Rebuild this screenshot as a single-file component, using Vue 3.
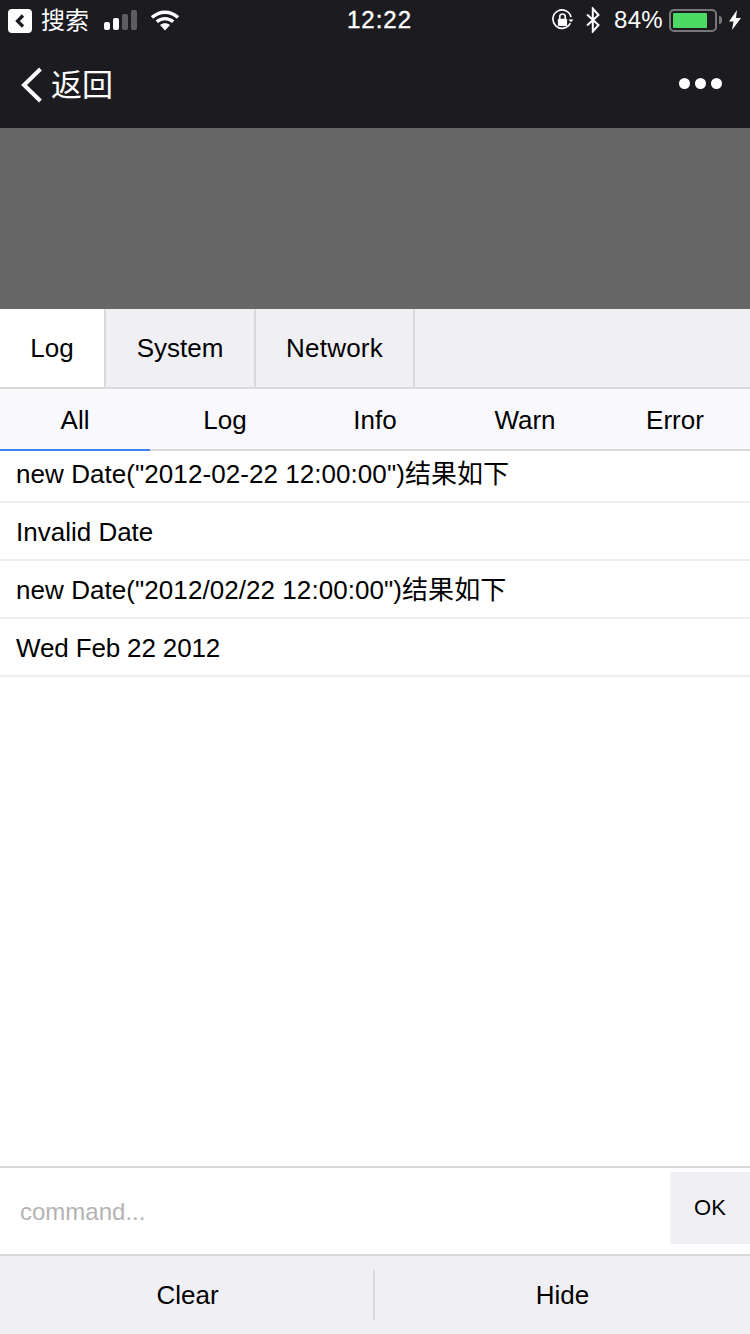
<template>
  <div class="page">
    <div class="status">
      <div class="status-left">
        <svg class="back-chip" width="24" height="24" viewBox="0 0 24 24">
          <rect width="24" height="24" rx="4" fill="#fff" />
          <path d="M15 6.500 9.500 12l5.500 5.500" fill="none" stroke="#1b1b20" stroke-width="3.200" />
        </svg>
        <span class="search">搜索</span>
        <div class="signal">
          <i class="on s1"></i><i class="on s2"></i><i class="s3"></i><i class="s4"></i>
        </div>
        <svg class="wifi" width="28" height="21" viewBox="0 0 28 21">
          <path d="M1 7.500C8.500 .5 19.500 .5 27 7.500" fill="none" stroke="#fff" stroke-width="3.400" />
          <path d="M5.800 11.800C10.500 7.500 17.500 7.500 22.200 11.800" fill="none" stroke="#fff" stroke-width="3.400" />
          <path d="M9 15c3-2.400 7-2.400 10 0l-5 5.500z" fill="#fff" />
        </svg>
      </div>
      <div class="clock">12:22</div>
      <div class="status-right">
        <svg class="lock" width="23" height="22" viewBox="0 0 24 24">
          <path d="M20.500 15.500A10 10 0 1 1 21.300 8.800" fill="none" stroke="#fff" stroke-width="1.800" />
          <path d="M18.500 11.500h5.500l-2.700 3z" fill="#fff" />
          <rect x="7" y="10.500" width="10" height="8" rx="1" fill="#fff" />
          <path d="M9 11V8.500a3 3 0 0 1 6 0V11" fill="none" stroke="#fff" stroke-width="1.800" />
        </svg>
        <svg class="bt" width="16" height="26" viewBox="0 0 16 26">
          <path d="M2 7.500 13.500 18 7.800 24.500V1.500L13.500 8 2 18.500" fill="none" stroke="#fff" stroke-width="2" />
        </svg>
        <span class="pct">84%</span>
        <div class="battery">
          <div class="battery-body"><div class="battery-fill"></div></div>
          <div class="battery-tip"></div>
        </div>
        <svg class="bolt" width="12" height="20" viewBox="0 0 12 20">
          <path d="M8 0 0 11.500h4.500L3 20l9-12H7z" fill="#fff" />
        </svg>
      </div>
    </div>
    <div class="nav">
      <svg class="nav-back" width="24" height="36" viewBox="0 0 24 36">
        <path d="M20.500 2 4 18l16.500 16" fill="none" stroke="#fff" stroke-width="4" />
      </svg>
      <span class="nav-title">返回</span>
      <div class="dots"><i></i><i></i><i></i></div>
    </div>
    <div class="mask"></div>
    <div class="tabs">
      <div class="tab active">Log</div>
      <div class="tab">System</div>
      <div class="tab">Network</div>
    </div>
    <div class="subtabs">
      <div v-for="(item, i) in subtabs" :key="item" class="subtab" :class="{ current: i === 0 }">{{ item }}</div>
    </div>
    <div class="list">
      <div v-for="line in lines" :key="line.text" class="row" :class="line.kind">{{ line.text }}</div>
    </div>
    <div class="command">
      <div class="placeholder">command...</div>
      <div class="ok">OK</div>
    </div>
    <div class="footer">
      <div class="foot-btn clear">Clear</div>
      <div class="foot-btn hide">Hide</div>
    </div>
  </div>
</template>

<script setup>
const subtabs = ['All', 'Log', 'Info', 'Warn', 'Error']
const lines = [
  { text: 'new Date("2012-02-22 12:00:00")结果如下', kind: 'wide' },
  { text: 'Invalid Date', kind: '' },
  { text: 'new Date("2012/02/22 12:00:00")结果如下', kind: 'wide' },
  { text: 'Wed Feb 22 2012', kind: 'narrow' }
]
</script>

<style>
html, body { margin: 0; background: #fff; }
</style>

<style scoped>
.page {
  width: 750px;
  height: 1334px;
  display: flex;
  flex-direction: column;
  overflow: hidden;
  background: #fff;
  color: #000;
  font-family: "Liberation Sans", "Noto Sans CJK SC", sans-serif;
  font-size: 26px;
  line-height: 30px;
}
.status {
  height: 40px;
  flex: none;
  background: #1b1b20;
  color: #fff;
  display: flex;
  align-items: center;
  justify-content: space-between;
  padding: 0 9px 0 8px;
  box-sizing: border-box;
  position: relative;
}
.status-left { display: flex; align-items: center; }
.back-chip { margin-top: 2px; }
.search { font-size: 24px; margin-left: 9px; line-height: 24px; margin-top: 2px; }
.signal { display: flex; align-items: flex-end; gap: 3px; height: 20px; margin-left: 15px; }
.signal i { width: 6px; border-radius: 2px; background: #5c5c62; }
.signal .on { background: #fff; }
.s1 { height: 8px; }
.s2 { height: 12px; }
.s3 { height: 16px; }
.s4 { height: 20px; }
.wifi { margin-left: 14px; }
.clock {
  font-size: 24px;
  letter-spacing: 1px;
  -webkit-text-stroke: .4px #fff;
  position: absolute;
  left: 347px;
  top: 5px;
}
.status-right { display: flex; align-items: center; justify-content: flex-end; }
.lock { margin-right: -1px; }
.bt { margin-left: 12px; }
.pct { font-size: 24px; margin-left: 13px; letter-spacing: .3px; }
.battery { display: flex; align-items: center; margin-left: 6px; }
.battery-body {
  width: 48px;
  height: 23px;
  box-sizing: border-box;
  border: 2px solid #77777b;
  border-radius: 5px;
  padding: 2px;
}
.battery-fill { width: 34px; height: 100%; background: #4cd964; border-radius: 1px; }
.battery-tip { width: 3px; height: 8px; margin-left: 2px; background: #77777b; border-radius: 0 4px 4px 0; }
.bolt { margin-left: 7px; }
.nav {
  height: 88px;
  flex: none;
  background: #1b1b20;
  color: #fff;
  display: flex;
  align-items: center;
  padding: 0 28px 0 20px;
  box-sizing: border-box;
}
.nav-back { margin-top: 1px; }
.nav-title { font-size: 31px; margin-left: 7px; line-height: 36px; margin-top: 3px; }
.dots { margin-left: auto; display: flex; gap: 5px; margin-top: -1px; }
.dots i { width: 11px; height: 11px; border-radius: 50%; background: #fff; }
.mask { height: 181px; flex: none; background: #666; }
.tabs {
  height: 80px;
  flex: none;
  display: flex;
  background: #efeff4;
  border-bottom: 2px solid #d9d9d9;
  box-sizing: border-box;
}
.tab {
  display: flex;
  align-items: center;
  justify-content: center;
  box-sizing: border-box;
  border-right: 2px solid #d9d9d9;
}
.tab:nth-child(1) { width: 106px; }
.tab:nth-child(2) { width: 150px; }
.tab:nth-child(3) { width: 159px; letter-spacing: .2px; }
.tab.active { background: #fff; }
.subtabs {
  height: 62px;
  flex: none;
  display: flex;
  background: #f9f8fd;
  box-sizing: border-box;
  border-bottom: 2px solid #d9d9d9;
}
.subtab {
  flex: 1;
  display: flex;
  align-items: center;
  justify-content: center;
  box-sizing: border-box;
  padding-top: 2px;
  margin-bottom: -2px;
  border-bottom: 2px solid transparent;
}
.subtab.current { border-bottom-color: #3b82f0; }
.list { flex: 1; min-height: 0; }
.row {
  height: 58px;
  box-sizing: border-box;
  padding-left: 16px;
  padding-top: 2px;
  display: flex;
  align-items: center;
  border-bottom: 2px solid #eee;
  white-space: nowrap;
}
.row:first-child { height: 52px; padding-top: 0; padding-bottom: 4px; }
.wide { letter-spacing: .06px; }
.narrow { letter-spacing: -.14px; }
.command {
  height: 88px;
  flex: none;
  box-sizing: border-box;
  display: flex;
  align-items: center;
  border-top: 2px solid #d9d9d9;
}
.placeholder { color: #b3b3b3; font-size: 24px; padding-left: 20px; flex: 1; margin-top: 2px; }
.ok {
  width: 80px;
  height: 72px;
  margin-top: -6px;
  background: #efeff4;
  display: flex;
  align-items: center;
  justify-content: center;
  font-size: 22px;
}
.footer {
  height: 80px;
  flex: none;
  box-sizing: border-box;
  background: #efeff4;
  border-top: 2px solid #d9d9d9;
  display: flex;
  align-items: center;
}
.foot-btn {
  height: 50px;
  display: flex;
  align-items: center;
  justify-content: center;
}
.clear { width: 375px; padding-left: 2px; border-right: 2px solid #d9d9d9; box-sizing: border-box; }
.hide { flex: 1; }
</style>
